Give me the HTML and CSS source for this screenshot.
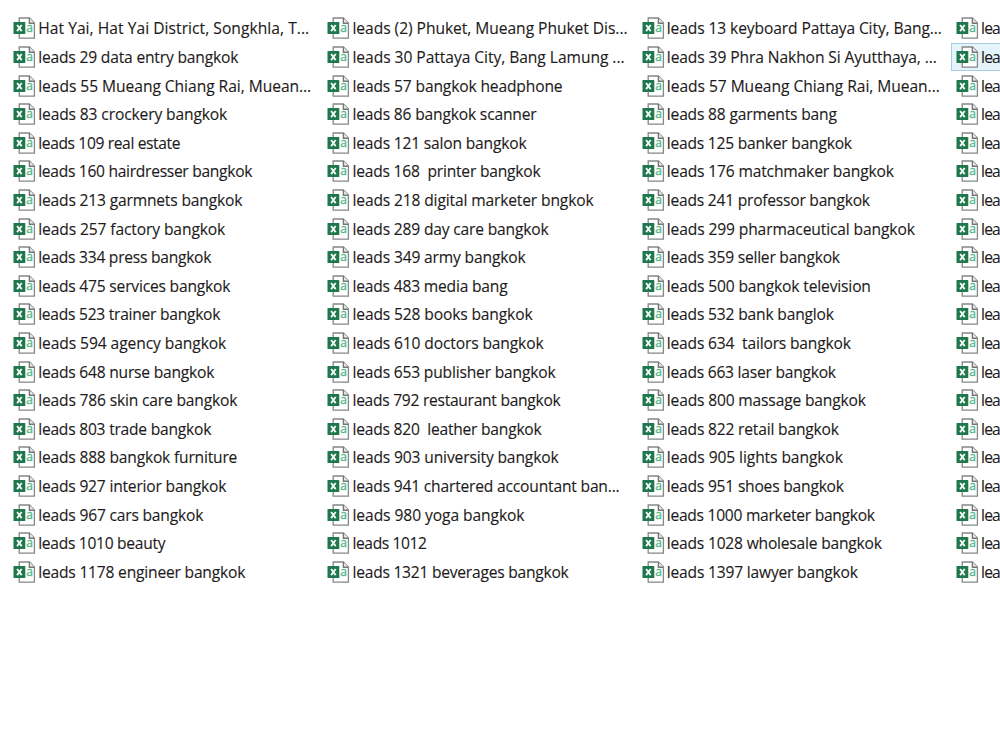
FILE: index.html
```html
<!DOCTYPE html>
<html lang="en">
<head>
<meta charset="utf-8">
<title>Leads</title>
<link rel="stylesheet" href="styles.css">
</head>
<body>
<svg class="defs" width="0" height="0" aria-hidden="true">
  <symbol id="csv" viewBox="0 0 23 22">
    <path d="M6.2 1h10.2l5 5v15.2H6.2z" fill="#fff" stroke="#858886" stroke-width="1.3"/>
    <path d="M16.4 1v5.2h5" fill="#eee" stroke="#747775" stroke-width="1.4"/>
    <rect x=".5" y="5" width="11.8" height="12" rx=".6" fill="#1f774d"/>
    <path d="M4.1 8l4.6 6.1M8.7 8l-4.6 6.1" stroke="#f4faf6" stroke-width="1.9" fill="none"/>
    <text class="letter" x="13.2" y="15">a</text>
  </symbol>
</svg>
<main class="files" id="files"></main>
<script src="files.js"></script>
</body>
</html>
```
FILE: styles.css
```css
body {
  margin: 0;
  background: #fff;
  overflow: hidden;
}
.defs { display: block; }
.letter {
  font: 12px "Open Sans", sans-serif;
  fill: #52b587;
  stroke: #52b587;
  stroke-width: .3px;
}
.files {
  display: grid;
  grid-template-columns: repeat(3, 314.3px) 49.1px;
  padding: 14.2px 0 0 8px;
  font: 15.6px/26px "Open Sans", "Noto Sans", sans-serif;
  color: #1d1b20;
  -webkit-text-stroke: .12px #1d1b20;
}
.column { display: flex; flex-direction: column; min-width: 0; }
.file {
  box-sizing: border-box;
  display: flex;
  align-items: center;
  height: 28.6px;
  border: 1px solid transparent;
  padding-left: 4px;
}
.column:last-child .file { border-right: 0; }
.file.selected {
  height: 27.6px;
  margin: .4px 0 .6px;
  background: #e5f3fb;
  border-color: #a5cde4;
}
.icon { width: 23px; height: 22px; flex: none; }
.name { white-space: pre; margin-left: 2.2px; }
```
FILE: files.js
```js
// Each entry: file name | width of its label in pixels
const columns = [
`Hat Yai, Hat Yai District, Songkhla, T...|271
leads 29 data entry bangkok|200
leads 55 Mueang Chiang Rai, Muean...|273
leads 83 crockery bangkok|189
leads 109 real estate|142
leads 160 hairdresser bangkok|214
leads 213 garmnets bangkok|204
leads 257 factory bangkok|187
leads 334 press bangkok|173
leads 475 services bangkok|192
leads 523 trainer bangkok|182
leads 594 agency bangkok|188
leads 648 nurse bangkok|176
leads 786 skin care bangkok|199
leads 803 trade bangkok|173
leads 888 bangkok furniture|199
leads 927 interior bangkok|188
leads 967 cars bangkok|165
leads 1010 beauty|127
leads 1178 engineer bangkok|207`,
`leads (2) Phuket, Mueang Phuket Dis...|275
leads 30 Pattaya City, Bang Lamung ...|272
leads 57 bangkok headphone|210
leads 86 bangkok scanner|184
leads 121 salon bangkok|174
leads 168  printer bangkok|188
leads 218 digital marketer bngkok|241
leads 289 day care bangkok|196
leads 349 army bangkok|173
leads 483 media bang|155
leads 528 books bangkok|180
leads 610 doctors bangkok|191
leads 653 publisher bangkok|203
leads 792 restaurant bangkok|208
leads 820  leather bangkok|189
leads 903 university bangkok|206
leads 941 chartered accountant ban...|267
leads 980 yoga bangkok|172
leads 1012|74
leads 1321 beverages bangkok|216`,
`leads 13 keyboard Pattaya City, Bang...|275
leads 39 Phra Nakhon Si Ayutthaya, ...|270
leads 57 Mueang Chiang Rai, Muean...|273
leads 88 garments bang|170
leads 125 banker bangkok|185
leads 176 matchmaker bangkok|227
leads 241 professor bangkok|203
leads 299 pharmaceutical bangkok|248
leads 359 seller bangkok|173
leads 500 bangkok television|204
leads 532 bank banglok|167
leads 634  tailors bangkok|184
leads 663 laser bangkok|169
leads 800 massage bangkok|199
leads 822 retail bangkok|172
leads 905 lights bangkok|176
leads 951 shoes bangkok|177
leads 1000 marketer bangkok|208
leads 1028 wholesale bangkok|215
leads 1397 lawyer bangkok|191`,
Array(20).fill('lea|18.7').join('\n')
];
const root = document.getElementById('files');
columns.forEach((text, c) => {
  const column = document.createElement('div');
  column.className = 'column';
  text.split('\n').forEach((line, r) => {
    const [label, width] = line.split('|');
    const file = document.createElement('div');
    file.className = c === 3 && r === 1 ? 'file selected' : 'file';
    file.innerHTML = '<svg class="icon"><use href="#csv"/></svg><span class="name"></span>';
    file.lastChild.textContent = label;
    file.lastChild.dataset.width = width;
    column.append(file);
  });
  root.append(column);
});
document.querySelectorAll('.name').forEach(el => {
  const slack = Number(el.dataset.width) - el.getBoundingClientRect().width;
  el.style.letterSpacing = slack / el.textContent.length + 'px';
});
```
